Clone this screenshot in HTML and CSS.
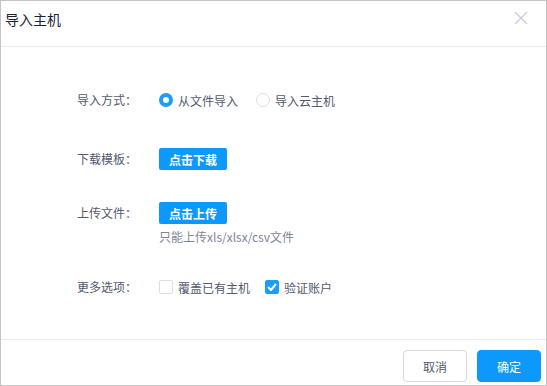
FILE: index.html
```html
<!DOCTYPE html>
<html lang="zh-CN">
<head>
    <meta charset="UTF-8">
    <title>导入主机</title>
    <link rel="stylesheet" href="styles.css">
</head>
<body>
    <div class="modal">
        <div class="modal-header">
            <span class="modal-title">导入主机</span>
            <svg class="modal-close" width="14" height="14" viewBox="0 0 14 14">
                <path d="M1 1 L13 13 M13 1 L1 13" stroke="#c5cbd8" stroke-width="1.2" fill="none"/>
            </svg>
        </div>
        <div class="modal-body">
            <div class="form-item">
                <label class="form-label">导入方式：</label>
                <div class="form-control">
                    <span class="radio checked"></span><span class="option-text">从文件导入</span>
                    <span class="radio"></span><span class="option-text">导入云主机</span>
                </div>
            </div>
            <div class="form-item item-download">
                <label class="form-label">下载模板：</label>
                <div class="form-control">
                    <button class="btn-small">点击下载</button>
                </div>
            </div>
            <div class="form-item item-upload">
                <label class="form-label">上传文件：</label>
                <div class="form-control stacked">
                    <div class="control-line"><button class="btn-small">点击上传</button></div>
                    <div class="hint">只能上传xls/xlsx/csv文件</div>
                </div>
            </div>
            <div class="form-item item-more">
                <label class="form-label">更多选项：</label>
                <div class="form-control">
                    <span class="checkbox"></span><span class="option-text check-text">覆盖已有主机</span>
                    <span class="checkbox checked">
                        <svg width="10" height="8" viewBox="0 0 10 8"><path d="M1 4 L4 7 L9 1" stroke="#fff" stroke-width="2" fill="none"/></svg>
                    </span><span class="option-text check-text">验证账户</span>
                </div>
            </div>
        </div>
        <div class="modal-footer">
            <button class="btn btn-default">取消</button>
            <button class="btn btn-primary">确定</button>
        </div>
    </div>
</body>
</html>
```

FILE: styles.css
```css
body {
    margin: 0;
    font-family: 'Noto Sans CJK SC', 'Noto Sans', sans-serif;
    font-size: 12px;
    color: #515a6e;
    background: #fff;
}
.modal {
    width: 547px;
    height: 386px;
    box-sizing: border-box;
    border: 1px solid #c4c4c4;
    display: flex;
    flex-direction: column;
}
.modal-header {
    height: 45px;
    border-bottom: 1px solid #e8eaec;
    display: flex;
    align-items: center;
    justify-content: space-between;
    padding: 0 18px 0 4px;
}
.modal-title {
    font-size: 14px;
    color: #17233d;
    margin-top: -9px;
}
.modal-close {
    margin-top: -12px;
}
.modal-body {
    flex: 1;
    padding: 37px 0 0 76px;
}
.form-item {
    display: flex;
    align-items: flex-start;
}
.item-download {
    margin-top: 27px;
}
.item-upload {
    margin-top: 22px;
}
.item-more {
    margin-top: 26px;
}
.form-label {
    width: 82px;
    line-height: 32px;
    height: 32px;
}
.form-control {
    display: flex;
    align-items: center;
    height: 32px;
}
.form-control.stacked {
    flex-direction: column;
    align-items: flex-start;
    height: auto;
}
.control-line {
    height: 32px;
    display: flex;
    align-items: center;
}
.hint {
    color: #808695;
    line-height: 16px;
}
.option-text {
    margin: 0 18px 0 5px;
}
.check-text {
    margin-right: 15px;
}
.radio {
    width: 14px;
    height: 14px;
    box-sizing: border-box;
    border: 1px solid #dcdee2;
    border-radius: 50%;
    background: #fff;
}
.radio.checked {
    border: 4px solid #1e9bff;
}
.checkbox {
    width: 14px;
    height: 14px;
    box-sizing: border-box;
    border: 1px solid #dcdee2;
    border-radius: 2px;
    background: #fff;
    display: flex;
    align-items: center;
    justify-content: center;
}
.checkbox.checked {
    background: #1e9bff;
    border-color: #1e9bff;
}
.btn-small {
    height: 22px;
    padding: 0 10px;
    border: none;
    border-radius: 2px;
    background: #0d99fb;
    color: #fff;
    font-family: inherit;
    font-size: 12px;
    font-weight: bold;
}
.modal-footer {
    height: 46px;
    border-top: 1px solid #e8eaec;
    box-sizing: border-box;
    display: flex;
    justify-content: flex-end;
    gap: 10px;
    padding: 10px 5px 0 0;
}
.btn {
    width: 64px;
    height: 32px;
    border-radius: 4px;
    font-family: inherit;
    font-size: 12px;
}
.btn-default {
    background: #fff;
    border: 1px solid #d7d9dd;
    color: #515a6e;
}
.btn-primary {
    background: #0d99fb;
    border: 1px solid #0d99fb;
    color: #fff;
}
```
